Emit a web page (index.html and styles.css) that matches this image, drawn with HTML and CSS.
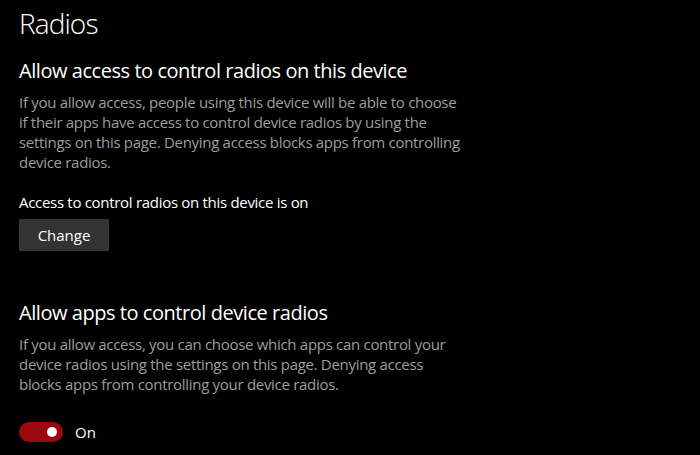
FILE: index.html
```html
<!DOCTYPE html>
<html>
<head>
<meta charset="utf-8">
<link rel="stylesheet" href="styles.css">
</head>
<body>
<main class="page">
  <h1 class="title">Radios</h1>
  <section class="group">
    <h2 class="heading">Allow access to control radios on this device</h2>
    <p class="desc">If you allow access, people using this device will be able to choose if their apps have access to control device radios by using the settings on this page. Denying access blocks apps from controlling device radios.</p>
    <p class="status">Access to control radios on this device is on</p>
    <button class="btn">Change</button>
  </section>
  <section class="group group-2">
    <h2 class="heading">Allow apps to control device radios</h2>
    <p class="desc">If you allow access, you can choose which apps can control your device radios using the settings on this page. Denying access blocks apps from controlling your device radios.</p>
    <div class="toggle-row">
      <span class="toggle"><span class="knob"></span></span>
      <span class="toggle-label">On</span>
    </div>
  </section>
</main>
</body>
</html>
```

FILE: styles.css
```css
html, body {
  margin: 0;
  padding: 0;
  background: #000;
}
body {
  width: 700px;
  height: 455px;
  overflow: hidden;
  font-family: "Open Sans", "Noto Sans", sans-serif;
  color: #fff;
}
.page {
  padding: 3px 0 0 19px;
}
.title {
  margin: 0;
  font-size: 28px;
  font-weight: 300;
  line-height: 40px;
  letter-spacing: -0.9px;
}
.group {
  margin-top: 14px;
}
.heading {
  margin: 0;
  font-size: 20px;
  font-weight: 400;
  line-height: 28px;
  letter-spacing: -0.45px;
}
.desc {
  margin: 7px 0 0;
  width: 446px;
  font-size: 15px;
  line-height: 20px;
  letter-spacing: -0.3px;
  color: #9d9d9d;
}
.status {
  margin: 20px 0 0;
  font-size: 15px;
  line-height: 20px;
  letter-spacing: -0.3px;
}
.btn {
  display: block;
  margin-top: 7px;
  width: 90px;
  height: 32px;
  border: none;
  background: #333;
  color: #fff;
  font-family: inherit;
  font-size: 15px;
  padding: 0;
}
.group-2 {
  margin-top: 48px;
}
.toggle-row {
  display: flex;
  align-items: center;
  gap: 12px;
  margin-top: 28px;
}
.toggle {
  position: relative;
  width: 44px;
  height: 20px;
  border-radius: 10px;
  background: #9c0a10;
}
.knob {
  position: absolute;
  top: 5px;
  right: 6px;
  width: 10px;
  height: 10px;
  border-radius: 50%;
  background: #fff;
}
.toggle-label {
  font-size: 15px;
  line-height: 20px;
}
```
